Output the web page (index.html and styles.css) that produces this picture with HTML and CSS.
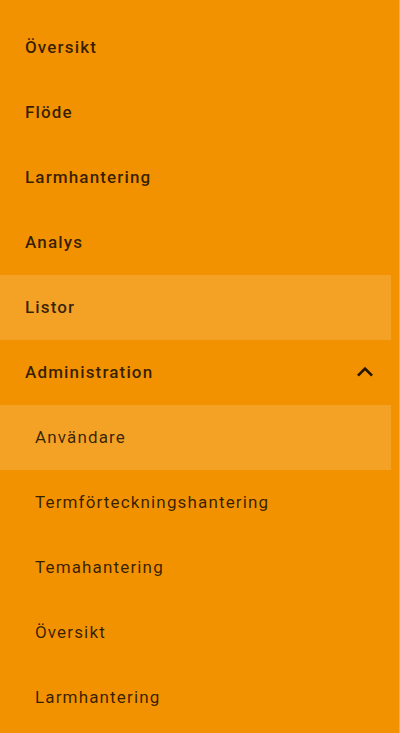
FILE: index.html
```html
<!DOCTYPE html>
<html lang="sv">
<head>
    <meta charset="UTF-8">
    <meta name="viewport" content="width=device-width, initial-scale=1.0">
    <title>Meny</title>
    <link rel="stylesheet" href="styles.css">
</head>
<body>

<nav class="drawer">
    <ul class="nav-list">
        <li class="nav-item">Översikt</li>
        <li class="nav-item">Flöde</li>
        <li class="nav-item">Larmhantering</li>
        <li class="nav-item">Analys</li>
        <li class="nav-item active">Listor</li>
        <li class="nav-item group-open">
            <span>Administration</span>
            <svg class="chevron" viewBox="0 0 24 24" width="32" height="32">
                <path d="M7.41 15.41 12 10.83l4.59 4.58L18 14l-6-6-6 6z"/>
            </svg>
        </li>
        <li class="nav-item sub active">Användare</li>
        <li class="nav-item sub">Termförteckningshantering</li>
        <li class="nav-item sub">Temahantering</li>
        <li class="nav-item sub">Översikt</li>
        <li class="nav-item sub">Larmhantering</li>
    </ul>
</nav>

</body>
</html>
```

FILE: styles.css
```css
* {
    margin: 0;
    padding: 0;
    box-sizing: border-box;
}

body {
    font-family: Roboto, 'Noto Sans', sans-serif;
    background: #f39200;
    height: 100vh;
    overflow: hidden;
}

.drawer {
    height: 100%;
    padding-top: 15px;
    padding-right: 8px;
    border-right: 1px solid #f6ad4d;
}

.nav-list {
    list-style: none;
}

.nav-item {
    height: 65px;
    display: flex;
    align-items: center;
    justify-content: space-between;
    padding: 0 10px 2px 25px;
    font-size: 17px;
    font-weight: 500;
    letter-spacing: 1.15px;
    color: rgba(0, 0, 0, 0.78);
}

.nav-item.sub {
    padding-left: 35px;
    font-weight: 400;
}

.nav-item.active {
    background: rgba(255, 255, 255, 0.15);
}

.chevron {
    fill: rgba(0, 0, 0, 0.85);
}
```
